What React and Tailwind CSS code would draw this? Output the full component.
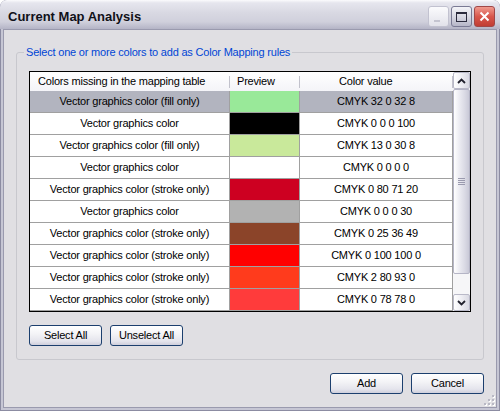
import React from "react";

const rows = [
  ["Vector graphics color (fill only)", "#99e999", "CMYK 32 0 32 8", true],
  ["Vector graphics color", "#000000", "CMYK 0 0 0 100"],
  ["Vector graphics color (fill only)", "#c9e99b", "CMYK 13 0 30 8"],
  ["Vector graphics color", "#ffffff", "CMYK 0 0 0 0"],
  ["Vector graphics color (stroke only)", "#cd0021", "CMYK 0 80 71 20"],
  ["Vector graphics color", "#b2b2b2", "CMYK 0 0 0 30"],
  ["Vector graphics color (stroke only)", "#8b4429", "CMYK 0 25 36 49"],
  ["Vector graphics color (stroke only)", "#ff0000", "CMYK 0 100 100 0"],
  ["Vector graphics color (stroke only)", "#ff3b1c", "CMYK 2 80 93 0"],
  ["Vector graphics color (stroke only)", "#ff3b3b", "CMYK 0 78 78 0"],
];

function XPButton({ children, className = "" }) {
  return (
    <button
      className={
        "h-[21px] w-[73px] rounded-[3px] border border-[#1c3f6e] bg-[linear-gradient(to_bottom,#ffffff_0%,#f4f4f7_40%,#e4e4ec_80%,#cfcfdc_100%)] text-[11px] tracking-[-0.2px] text-black leading-none flex items-center justify-center " +
        className
      }
    >
      {children}
    </button>
  );
}

function ScrollBtn({ up }) {
  return (
    <div className="h-[17px] w-[17px] rounded-[2px] border border-[#b9b9c8] bg-[linear-gradient(to_right,#ffffff_0%,#eeeef3_50%,#d9d9e3_100%)] flex items-center justify-center">
      <svg width="9" height="6" viewBox="0 0 9 6">
        <polyline
          points={up ? "1,5 4.5,1.5 8,5" : "1,1 4.5,4.5 8,1"}
          fill="none"
          stroke="#22222e"
          strokeWidth="1.8"
        />
      </svg>
    </div>
  );
}

export default function App() {
  return (
    <div className="w-[500px] h-[411px] flex flex-col rounded-t-[7px] overflow-hidden bg-[#c6c6d4] shadow-[inset_1px_0_0_#8c8ca2,inset_-1px_0_0_#8c8ca2,inset_0_-1px_0_#8c8ca2] font-['Liberation_Sans',Arial,sans-serif]">
      {/* Title bar */}
      <div className="h-[29px] flex items-start justify-between px-[5px] bg-[linear-gradient(to_bottom,#fbfbfd_0%,#e6e6ee_10%,#d8d8e2_45%,#d0d0dc_75%,#b4b4c6_100%)]">
        <div className="mt-[9px] ml-[3px] text-[13px] leading-[16px] font-bold text-[#101018]">
          Current Map Analysis
        </div>
        <div className="mt-[6px] flex gap-[2px]">
          <div className="h-[21px] w-[21px] rounded-[3px] border border-[#c2c2d0] bg-[linear-gradient(to_bottom,#fbfbfd,#e2e2ea)] relative">
            <div className="absolute left-[5px] bottom-[4px] w-[6px] h-[2px] bg-[#c4c4d0]" />
          </div>
          <div className="h-[21px] w-[21px] rounded-[3px] border border-[#7a7a94] bg-[linear-gradient(to_bottom,#f4f4f8,#d2d2de_60%,#b6b6c8)] flex items-center justify-center">
            <div className="w-[11px] h-[10px] border border-[#2a2a3c] border-t-[2px]" />
          </div>
          <div className="h-[21px] w-[21px] rounded-[3px] border border-[#a04848] bg-[linear-gradient(to_bottom,#f09a8e,#d8574c_50%,#c13d34)] flex items-center justify-center">
            <svg width="11" height="11" viewBox="0 0 11 11">
              <path d="M1.5 1.5 L9.5 9.5 M9.5 1.5 L1.5 9.5" stroke="#ffffff" strokeWidth="2" />
            </svg>
          </div>
        </div>
      </div>

      {/* Body */}
      <div className="flex-1 mx-[3px] mb-[3px] border border-[#9a9aae] bg-[#e0dfe3] flex flex-col px-[12px] pt-[22px] relative">
        {/* Group box */}
        <div className="h-[308px] rounded-[3px] border border-[#c8c8ce] relative pt-[18px] px-[12px]">
          <span className="absolute -top-[7px] left-[7px] px-[2px] bg-[#e0dfe3] text-[11px] leading-[13px] tracking-[-0.2px] text-[#0046d5]">
            Select one or more colors to add as Color Mapping rules
          </span>

          {/* Table */}
          <div className="w-[442px] h-[241px] border border-black bg-white flex">
            <div className="w-[423px] flex flex-col">
              {/* header */}
              <div className="h-[19px] flex bg-[linear-gradient(to_bottom,#ffffff,#f4f4f8)] text-[11px] tracking-[-0.2px] text-black">
                <div className="w-[200px] flex items-center justify-between pl-[8px]">
                  <span>Colors missing in the mapping table</span>
                  <span className="w-px h-[12px] bg-[#c2c2cc]" />
                </div>
                <div className="w-[70px] flex items-center justify-between pl-[7px]">
                  <span>Preview</span>
                  <span className="w-px h-[12px] bg-[#c2c2cc]" />
                </div>
                <div className="w-[153px] flex items-center justify-between pl-[39px]">
                  <span>Color value</span>
                  <span className="w-px h-[12px] bg-[#c2c2cc]" />
                </div>
              </div>
              {rows.map(([name, color, value, sel], i) => (
                <div
                  key={i}
                  className={
                    "h-[22px] flex text-[11px] tracking-[-0.2px] text-black " +
                    (sel ? "bg-[#b2b4bf]" : "bg-white")
                  }
                >
                  <div className="w-[200px] border-r border-b border-[#a0a0a0] flex items-center justify-center">
                    {name}
                  </div>
                  <div
                    className="w-[70px] border-r border-b border-[#a0a0a0]"
                    style={{ backgroundColor: color }}
                  />
                  <div className="w-[153px] border-r border-b border-[#a0a0a0] flex items-center justify-center">
                    {value}
                  </div>
                </div>
              ))}
            </div>
            {/* Scrollbar */}
            <div className="w-[17px] flex flex-col bg-[#f6f6f8]">
              <ScrollBtn up />
              <div className="h-[185px] rounded-[2px] border border-[#b5b5c6] bg-[linear-gradient(to_right,#ffffff_0%,#ececf2_35%,#d8d8e3_75%,#c9c9d7_100%)] flex flex-col items-center justify-center gap-[1px]">
                <div className="w-[7px] h-px bg-[#9a9aae]" />
                <div className="w-[7px] h-px bg-[#9a9aae]" />
                <div className="w-[7px] h-px bg-[#9a9aae]" />
                <div className="w-[7px] h-px bg-[#9a9aae]" />
              </div>
              <div className="h-[20px]" />
              <ScrollBtn />
            </div>
          </div>

          {/* buttons */}
          <div className="mt-[13px] flex gap-[8px]">
            <XPButton>Select All</XPButton>
            <XPButton>Unselect All</XPButton>
          </div>
        </div>

        <div className="mt-[13px] flex justify-end gap-[8px]">
          <XPButton>Add</XPButton>
          <XPButton>Cancel</XPButton>
        </div>

        {/* size grip */}
        <svg className="absolute right-[1px] bottom-[1px]" width="11" height="11" viewBox="0 0 11 11">
          {[
            [8, 0],
            [4, 4], [8, 4],
            [0, 8], [4, 8], [8, 8],
          ].map(([x, y], k) => (
            <g key={k}>
              <rect x={x + 1} y={y + 1} width="2" height="2" fill="#ffffff" />
              <rect x={x} y={y} width="2" height="2" fill="#b8b8c4" />
            </g>
          ))}
        </svg>
      </div>
    </div>
  );
}
